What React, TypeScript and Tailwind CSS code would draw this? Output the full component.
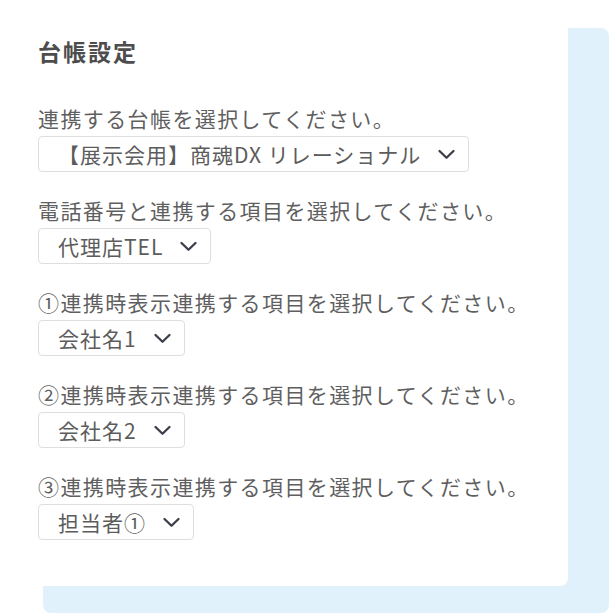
const fields = [
  { label: "連携する台帳を選択してください。", value: "【展示会用】商魂DX リレーショナル" },
  { label: "電話番号と連携する項目を選択してください。", value: "代理店TEL" },
  { label: "①連携時表示連携する項目を選択してください。", value: "会社名1" },
  { label: "②連携時表示連携する項目を選択してください。", value: "会社名2" },
  { label: "③連携時表示連携する項目を選択してください。", value: "担当者①" },
];

function Chevron() {
  return (
    <svg width="19" height="11" viewBox="0 0 19 11" fill="none" className="shrink-0">
      <polyline
        points="2.5,2 9.5,8.8 16.5,2"
        stroke="#3c3f4a"
        strokeWidth="2.3"
        strokeLinecap="round"
        strokeLinejoin="round"
      />
    </svg>
  );
}

function SelectBox({ value }: { value: string }) {
  return (
    <div className="inline-flex h-[36px] items-center gap-[16px] rounded-[4px] border border-[#dedede] bg-white pl-[19px] pr-[12px] text-[21px] tracking-[1px] text-[#5c5c5c]">
      <span className="whitespace-nowrap leading-none">{value}</span>
      <Chevron />
    </div>
  );
}

export default function App() {
  return (
    <div
      className="grid h-[614px] w-[610px] bg-white"
      style={{ fontFamily: '"Noto Sans CJK JP", "Noto Sans", sans-serif' }}
    >
      <div className="col-start-1 row-start-1 ml-[43px] mt-[28px] mr-[1px] mb-[1px] rounded-[8px] bg-[#e1f1fb]" />
      <div className="col-start-1 row-start-1 mr-[42px] mb-[28px] rounded-br-[8px] bg-white pl-[38px] pt-[36px]">
        <h2 className="mb-[39px] h-[30px] text-[23px] font-bold leading-[30px] tracking-[2px] text-[#4d4d4d]">
          台帳設定
        </h2>
        <div className="flex flex-col gap-[25px]">
          {fields.map((f) => (
            <div key={f.label} className="flex flex-col items-start gap-[5px]">
              <div className="h-[26px] whitespace-nowrap text-[21px] leading-[26px] tracking-[1.4px] text-[#5f5f5f]">
                {f.label}
              </div>
              <SelectBox value={f.value} />
            </div>
          ))}
        </div>
      </div>
    </div>
  );
}
